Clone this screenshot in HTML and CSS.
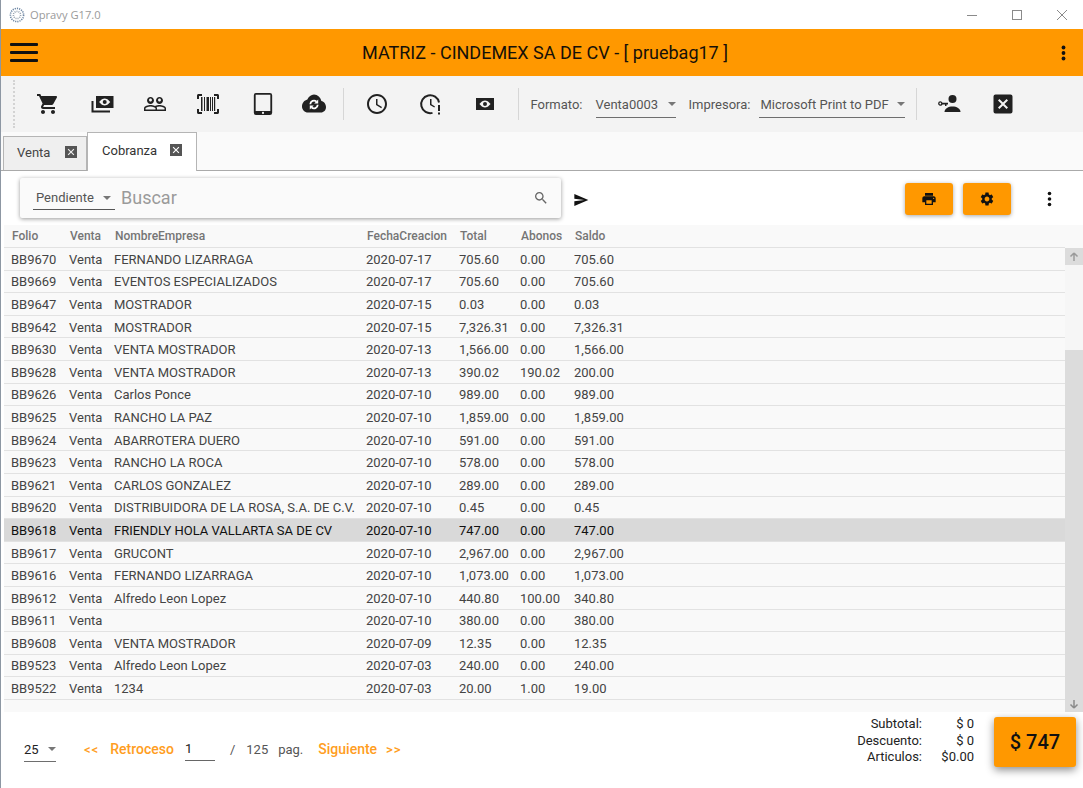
FILE: index.html
```html
<!DOCTYPE html>
<html lang="es">
<head>
<meta charset="utf-8">
<title>Opravy G17.0</title>
<link rel="stylesheet" href="styles.css">
</head>
<body>
<div class="window">
  <header class="titlebar">
    <svg class="applogo" viewBox="0 0 16 16"><circle cx="8" cy="8" r="6.6" fill="none" stroke="#6d86a3" stroke-width="1.6" stroke-dasharray="1.2 1"/><circle cx="8" cy="8" r="3.6" fill="none" stroke="#9aa5b1" stroke-width="1.6" stroke-dasharray="1 1"/></svg>
    <span class="apptitle">Opravy G17.0</span>
    <div class="winbtns">
      <svg viewBox="0 0 12 12" class="winicon"><path d="M1 6.500h10" stroke="#8a8a8a" fill="none"/></svg>
      <svg viewBox="0 0 12 12" class="winicon"><rect x="1.500" y="1.500" width="9" height="9" stroke="#8a8a8a" fill="none"/></svg>
      <svg viewBox="0 0 12 12" class="winicon"><path d="M1 1l10 10M11 1L1 11" stroke="#8a8a8a" fill="none"/></svg>
    </div>
  </header>

  <div class="appbar">
    <div class="hamburger"><span></span><span></span><span></span></div>
    <h1 class="apphead">MATRIZ - CINDEMEX SA DE CV - [ pruebag17 ]</h1>
    <svg class="kebab" viewBox="0 0 4 16"><circle cx="2" cy="2.500" r="1.900"/><circle cx="2" cy="8" r="1.900"/><circle cx="2" cy="13.500" r="1.900"/></svg>
  </div>

  <div class="toolbar">
    <div class="grip"></div>
    <div class="toolgroup first">
      <svg class="ti" viewBox="0 0 24 24"><path d="M7 18c-1.100 0-1.990.9-1.990 2S5.900 22 7 22s2-.9 2-2-.9-2-2-2zM1 2v2h2l3.600 7.590-1.350 2.450c-.16.28-.25.61-.25.96 0 1.100.9 2 2 2h12v-2H7.420c-.14 0-.25-.11-.25-.25l.03-.12.9-1.630h7.450c.75 0 1.410-.41 1.750-1.030l3.580-6.490c.08-.14.12-.31.12-.48 0-.55-.45-1-1-1H5.210l-.94-2H1zm16 16c-1.100 0-1.990.9-1.990 2s.89 2 1.990 2 2-.9 2-2-.9-2-2-2z"/></svg>
      <svg class="ti money" viewBox="0 0 24 24"><path fill-rule="evenodd" d="M6 4h17.500v12H6zM14.700 6.500c-3 0-5.500 3.500-5.500 3.500s2.500 3.500 5.500 3.500 5.500-3.500 5.500-3.500-2.500-3.500-5.500-3.500zM14.700 8a2 2 0 1 1 0 4 2 2 0 0 1 0-4zM1.500 9h2v9.500H20v2H1.500z"/></svg>
      <svg class="ti" viewBox="0 0 24 24"><path d="M16.500 13c-1.200 0-3.070.34-4.500 1-1.430-.67-3.300-1-4.500-1C5.330 13 1 14.080 1 16.250V19h22v-2.750c0-2.170-4.330-3.250-6.500-3.250zm-4 4.500h-10v-1.250c0-.54 2.560-1.750 5-1.750s5 1.210 5 1.750v1.250zm9 0H14v-1.250c0-.46-.2-.86-.52-1.220.88-.3 1.960-.53 3.020-.53 2.440 0 5 1.210 5 1.750v1.250zM7.500 12c1.930 0 3.500-1.570 3.500-3.500S9.430 5 7.500 5 4 6.570 4 8.500 5.570 12 7.500 12zm0-5.500c.83 0 1.500.67 1.500 1.500s-.67 1.500-1.500 1.500S6 8.830 6 8s.67-1.500 1.500-1.500zm9 5.500c1.930 0 3.500-1.570 3.500-3.500S18.430 5 16.500 5 13 6.570 13 8.500s1.570 3.500 3.500 3.500zm0-5.500c.83 0 1.500.67 1.500 1.500s-.67 1.500-1.500 1.500S15 8.830 15 8s.67-1.500 1.500-1.500z"/></svg>
      <svg class="ti" viewBox="0 0 24 24"><path d="M1 7V3.500C1 2.700 1.700 2 2.500 2H6v2H3v3zM23 7V3.500c0-.8-.7-1.500-1.500-1.500H18v2h3v3zM1 17v3.500c0 .8.7 1.500 1.500 1.500H6v-2H3v-3zM23 17v3.500c0 .8-.7 1.500-1.500 1.500H18v-2h3v-3zM5 5h1.500v14H5zM8 5h1v14H8zM10.500 5H13v14h-2.500zM14 5h1v14h-1zM16 5h1v14h-1zM18 5h1.200v14H18z"/></svg>
      <svg class="ti tablet" viewBox="0 0 24 24"><path fill-rule="evenodd" d="M4.500 0h15A2.500 2.500 0 0 1 22 2.500v19a2.500 2.500 0 0 1-2.500 2.500h-15A2.500 2.500 0 0 1 2 21.500v-19A2.500 2.500 0 0 1 4.500 0zM4 2v17.500h16V2zM12 20.500a1.200 1.200 0 1 0 0 2.400 1.200 1.200 0 0 0 0-2.400z"/></svg>
      <svg class="ti" viewBox="0 0 24 24"><path d="M19.350 9.040C18.670 5.590 15.640 2.500 12 2.500 9.110 2.500 6.600 4.640 5.350 7.540 2.340 8.360 0 10.910 0 14.500c0 3.310 2.690 6 6 6h13c2.760 0 5-2.240 5-5.500 0-2.640-2.050-5.780-4.650-5.960z"/><path d="M8.300 12.300a3.700 3.700 0 0 1 6.200-2.700M15.700 12.700a3.700 3.700 0 0 1-6.200 2.700" fill="none" stroke="#fff" stroke-width="1.800"/><path d="M16.200 7.400v4h-4zM7.800 17.600v-4h4z" fill="#fff"/></svg>
    </div>
    <div class="vsep sep1"></div>
    <div class="toolgroup second">
      <svg class="ti" viewBox="0 0 24 24"><path d="M11.990 2C6.470 2 2 6.480 2 12s4.470 10 9.990 10C17.520 22 22 17.520 22 12S17.520 2 11.990 2zM12 20c-4.420 0-8-3.580-8-8s3.580-8 8-8 8 3.580 8 8-3.580 8-8 8zm.5-13H11v6l5.250 3.150.75-1.230-4.500-2.670z"/></svg>
      <svg class="ti" viewBox="0 0 24 24"><path d="M20 10.500A9 9 0 1 0 13.500 20.900" fill="none" stroke="#212121" stroke-width="2"/><path d="M12.500 7H11v6l4.300 2.600.7-1.200-3.500-2.100zM19 13h2v6h-2zM19 20.500h2v2h-2z"/></svg>
      <svg class="ti" viewBox="0 0 24 24"><path fill-rule="evenodd" d="M3 6h18v12H3zM12 8.500c-3 0-5.500 3.500-5.500 3.500s2.500 3.500 5.500 3.500 5.500-3.500 5.500-3.500-2.500-3.500-5.500-3.500zM12 10a2 2 0 1 1 0 4 2 2 0 0 1 0-4z"/></svg>
    </div>
    <div class="vsep sep2"></div>
    <label class="fieldlabel lblfmt">Formato:</label>
    <div class="select sel1"><span>Venta0003</span><i class="caret"></i></div>
    <label class="fieldlabel lblimp">Impresora:</label>
    <div class="select sel2"><span>Microsoft Print to PDF</span><i class="caret"></i></div>
    <div class="vsep sep3"></div>
    <svg class="ti keyuser" viewBox="0 0 24 24"><circle cx="15.500" cy="7" r="4"/><path d="M7.500 20c0-3.500 4-5.500 8-5.500s8 2 8 5.500z"/><path fill-rule="evenodd" d="M3.300 9.200a2.300 2.300 0 0 1 2.200 1.600H11v1.600h-1.500V14H8v-1.600H5.500a2.300 2.300 0 1 1-2.200-3.200zM3.300 10.600a.9.9 0 1 0 0 1.800.9.9 0 0 0 0-1.800z"/></svg>
    <svg class="ti closebox" viewBox="0 0 24 24"><path fill-rule="evenodd" d="M4.500 2.500h15a2 2 0 0 1 2 2v15a2 2 0 0 1-2 2h-15a2 2 0 0 1-2-2v-15a2 2 0 0 1 2-2zM17 15.590L15.590 17 12 13.410 8.410 17 7 15.590 10.590 12 7 8.410 8.410 7 12 10.590 15.590 7 17 8.410 13.410 12z"/></svg>
  </div>

  <nav class="tabs">
    <div class="tab idle"><span>Venta</span><svg class="tabx" viewBox="0 0 12 12"><path d="M0 0h12v12H0zM3.500 2.700L2.700 3.500 5.200 6 2.700 8.500l.8.8L6 6.800l2.500 2.500.8-.8L6.800 6l2.500-2.500-.8-.8L6 5.200z" fill-rule="evenodd"/></svg></div>
    <div class="tab active"><span>Cobranza</span><svg class="tabx" viewBox="0 0 12 12"><path d="M0 0h12v12H0zM3.500 2.700L2.700 3.500 5.200 6 2.700 8.500l.8.8L6 6.800l2.500 2.500.8-.8L6.800 6l2.500-2.500-.8-.8L6 5.200z" fill-rule="evenodd"/></svg></div>
  </nav>

  <section class="searchrow">
    <div class="searchcard">
      <div class="select sel3"><span>Pendiente</span><i class="caret"></i></div>
      <span class="placeholder">Buscar</span>
      <svg class="searchicon" viewBox="0 0 24 24"><path d="M15.500 14h-.79l-.28-.27C15.410 12.590 16 11.110 16 9.500 16 5.910 13.090 3 9.500 3S3 5.910 3 9.500 5.910 16 9.500 16c1.610 0 3.090-.59 4.230-1.570l.27.28v.79l5 4.990L20.490 19l-4.990-5zm-6 0C7.010 14 5 11.990 5 9.500S7.010 5 9.500 5 14 7.010 14 9.500 11.990 14 9.500 14z"/></svg>
    </div>
    <svg class="sendicon" viewBox="0 0 24 24"><path d="M2.010 21L23 12 2.010 3 2 10l15 2-15 2z"/></svg>
    <div class="actions">
      <button class="orangebtn"><svg viewBox="0 0 24 24"><path d="M19 8H5c-1.660 0-3 1.340-3 3v6h4v4h12v-4h4v-6c0-1.660-1.340-3-3-3zm-3 11H8v-5h8v5zm3-7c-.55 0-1-.45-1-1s.45-1 1-1 1 .45 1 1-.45 1-1 1zm-1-9H6v4h12V3z"/></svg></button>
      <button class="orangebtn"><svg viewBox="0 0 24 24"><path d="M19.140 12.940c.04-.3.06-.61.06-.94 0-.32-.02-.64-.07-.94l2.030-1.580c.18-.14.23-.41.12-.61l-1.920-3.320c-.12-.22-.37-.29-.59-.22l-2.390.96c-.5-.38-1.030-.7-1.620-.94L14.400 2.810c-.04-.24-.24-.41-.48-.41h-3.840c-.24 0-.43.17-.47.41L9.250 5.350c-.59.24-1.130.57-1.620.94l-2.390-.96c-.22-.08-.47 0-.59.22L2.740 8.870c-.12.21-.08.47.12.61l2.030 1.580c-.05.3-.09.63-.09.94s.02.64.07.94l-2.030 1.580c-.18.14-.23.41-.12.61l1.920 3.320c.12.22.37.29.59.22l2.390-.96c.5.38 1.030.7 1.620.94l.36 2.540c.05.24.24.41.48.41h3.840c.24 0 .44-.17.47-.41l.36-2.540c.59-.24 1.130-.56 1.620-.94l2.390.96c.22.08.47 0 .59-.22l1.920-3.320c.12-.22.07-.47-.12-.61l-2.010-1.580zM12 15.600c-1.980 0-3.600-1.620-3.600-3.600s1.620-3.600 3.600-3.600 3.600 1.620 3.600 3.600-1.620 3.600-3.600 3.600z"/></svg></button>
      <svg class="kebab kebab2" viewBox="0 0 4 16"><circle cx="2" cy="2.500" r="1.800"/><circle cx="2" cy="8" r="1.800"/><circle cx="2" cy="13.500" r="1.800"/></svg>
    </div>
  </section>

  <section class="grid">
    <div class="row head"><span>Folio</span><span>Venta</span><span>NombreEmpresa</span><span>FechaCreacion</span><span>Total</span><span>Abonos</span><span>Saldo</span></div>
    <div class="body">
      <div class="rows">
        <div class="row"><span>BB9670</span><span>Venta</span><span>FERNANDO LIZARRAGA</span><span>2020-07-17</span><span>705.60</span><span>0.00</span><span>705.60</span></div>
        <div class="row"><span>BB9669</span><span>Venta</span><span>EVENTOS ESPECIALIZADOS</span><span>2020-07-17</span><span>705.60</span><span>0.00</span><span>705.60</span></div>
        <div class="row"><span>BB9647</span><span>Venta</span><span>MOSTRADOR</span><span>2020-07-15</span><span>0.03</span><span>0.00</span><span>0.03</span></div>
        <div class="row"><span>BB9642</span><span>Venta</span><span>MOSTRADOR</span><span>2020-07-15</span><span>7,326.31</span><span>0.00</span><span>7,326.31</span></div>
        <div class="row"><span>BB9630</span><span>Venta</span><span>VENTA MOSTRADOR</span><span>2020-07-13</span><span>1,566.00</span><span>0.00</span><span>1,566.00</span></div>
        <div class="row"><span>BB9628</span><span>Venta</span><span>VENTA MOSTRADOR</span><span>2020-07-13</span><span>390.02</span><span>190.02</span><span>200.00</span></div>
        <div class="row"><span>BB9626</span><span>Venta</span><span>Carlos Ponce</span><span>2020-07-10</span><span>989.00</span><span>0.00</span><span>989.00</span></div>
        <div class="row"><span>BB9625</span><span>Venta</span><span>RANCHO LA PAZ</span><span>2020-07-10</span><span>1,859.00</span><span>0.00</span><span>1,859.00</span></div>
        <div class="row"><span>BB9624</span><span>Venta</span><span>ABARROTERA DUERO</span><span>2020-07-10</span><span>591.00</span><span>0.00</span><span>591.00</span></div>
        <div class="row"><span>BB9623</span><span>Venta</span><span>RANCHO LA ROCA</span><span>2020-07-10</span><span>578.00</span><span>0.00</span><span>578.00</span></div>
        <div class="row"><span>BB9621</span><span>Venta</span><span>CARLOS GONZALEZ</span><span>2020-07-10</span><span>289.00</span><span>0.00</span><span>289.00</span></div>
        <div class="row"><span>BB9620</span><span>Venta</span><span>DISTRIBUIDORA DE LA ROSA, S.A. DE C.V.</span><span>2020-07-10</span><span>0.45</span><span>0.00</span><span>0.45</span></div>
        <div class="row selected"><span>BB9618</span><span>Venta</span><span>FRIENDLY HOLA VALLARTA SA DE CV</span><span>2020-07-10</span><span>747.00</span><span>0.00</span><span>747.00</span></div>
        <div class="row"><span>BB9617</span><span>Venta</span><span>GRUCONT</span><span>2020-07-10</span><span>2,967.00</span><span>0.00</span><span>2,967.00</span></div>
        <div class="row"><span>BB9616</span><span>Venta</span><span>FERNANDO LIZARRAGA</span><span>2020-07-10</span><span>1,073.00</span><span>0.00</span><span>1,073.00</span></div>
        <div class="row"><span>BB9612</span><span>Venta</span><span>Alfredo Leon Lopez</span><span>2020-07-10</span><span>440.80</span><span>100.00</span><span>340.80</span></div>
        <div class="row"><span>BB9611</span><span>Venta</span><span></span><span>2020-07-10</span><span>380.00</span><span>0.00</span><span>380.00</span></div>
        <div class="row"><span>BB9608</span><span>Venta</span><span>VENTA MOSTRADOR</span><span>2020-07-09</span><span>12.35</span><span>0.00</span><span>12.35</span></div>
        <div class="row"><span>BB9523</span><span>Venta</span><span>Alfredo Leon Lopez</span><span>2020-07-03</span><span>240.00</span><span>0.00</span><span>240.00</span></div>
        <div class="row"><span>BB9522</span><span>Venta</span><span>1234</span><span>2020-07-03</span><span>20.00</span><span>1.00</span><span>19.00</span></div>
      </div>
      <div class="scrollbar">
        <div class="sbtn"><svg viewBox="0 0 10 10"><path d="M5 1L1.500 4.500M5 1l3.500 3.500M5 1v8" fill="none" stroke="#9a9a9a" stroke-width="1.500"/></svg></div>
        <div class="strack"></div>
        <div class="sthumb"></div>
        <div class="sbtn"><svg viewBox="0 0 10 10"><path d="M5 9L1.500 5.500M5 9l3.500-3.500M5 9V1" fill="none" stroke="#8a8a8a" stroke-width="1.500"/></svg></div>
      </div>
    </div>
  </section>

  <footer class="footer">
    <div class="select sel4"><span>25</span><i class="caret"></i></div>
    <a class="pglink arrows first-arrows">&lt;&lt;</a>
    <a class="pglink">Retroceso</a>
    <div class="pageinput">1</div>
    <span class="pgtext slash">/</span>
    <span class="pgtext">125</span>
    <span class="pgtext pag">pag.</span>
    <a class="pglink sig">Siguiente</a>
    <a class="pglink arrows">&gt;&gt;</a>
    <div class="totals">
      <span>Subtotal:</span><span>$ 0</span>
      <span>Descuento:</span><span>$ 0</span>
      <span>Articulos:</span><span>$0.00</span>
    </div>
    <button class="totalbtn">$ 747</button>
  </footer>
</div>
</body>
</html>
```

FILE: styles.css
```css
* { box-sizing: border-box; }
html, body { margin: 0; padding: 0; height: 100%; overflow: hidden; background: #fff; }
body { font-family: Roboto, "Liberation Sans", sans-serif; color: #444; }
.window { width: 1083px; height: 788px; display: flex; flex-direction: column; border-left: 1px solid #8d97a3; }

.titlebar { height: 29px; flex: none; display: flex; align-items: center; padding-left: 8px; background: #fff; }
.applogo { width: 16px; height: 16px; }
.apptitle { margin-left: 5px; font: 11.2px "Open Sans", sans-serif; color: #9a9a9a; }
.winbtns { margin-left: auto; display: flex; gap: 33px; padding-right: 15px; }
.winicon { width: 12px; height: 12px; display: block; }

.appbar { height: 47px; flex: none; display: flex; align-items: center; background: #ff9800; padding: 0 17px 0 9px; }
.hamburger { width: 28px; display: flex; flex-direction: column; gap: 5px; }
.hamburger span { display: block; height: 3px; background: #111; border-radius: 1px; }
.apphead { flex: 1; margin: 0; text-align: center; font-size: 18px; font-weight: 400; color: #151008; padding-right: 9px; }
.kebab { width: 5px; height: 16px; fill: #111; display: block; }

.toolbar { height: 56px; flex: none; display: flex; align-items: center; background: #f3f3f3; padding-left: 12px; color: #444; }
.grip { width: 2px; height: 48px; border-left: 2px dotted #d3d3d3; }
.toolgroup { display: flex; align-items: center; }
.toolgroup.first { gap: 29.3px; margin-left: 21px; }
.toolgroup.second { gap: 30px; margin-left: 21px; }
.ti { width: 24px; height: 24px; flex: none; fill: #212121; display: block; }
.money { margin: 0 -1px 0 1px; }
.tablet { height: 22px; margin: 0 -2px 0 2px; }
.vsep { width: 1px; height: 32px; background: #d6d6d6; margin-left: 16px; flex: none; }
.sep1 { margin-left: 17px; }
.sep2 { margin-left: 21px; }
.fieldlabel { font-size: 13px; color: #555; }
.lblfmt { margin-left: 11px; }
.lblimp { margin-left: 13px; }
.select { display: flex; align-items: center; justify-content: space-between; border-bottom: 1px solid #6e6e6e; font-size: 13px; color: #555; height: 28px; padding-top: 1px; }
.caret { width: 0; height: 0; border-left: 4px solid transparent; border-right: 4px solid transparent; border-top: 4px solid #777; }
.sel1 { width: 80px; margin-left: 13px; }
.sel2 { width: 146px; margin-left: 9px; padding-left: 1px; }
.sep3 { margin-left: 11px; }
.keyuser { margin-left: 20px; }
.closebox { margin-left: 30px; }

.tabs { height: 39px; flex: none; display: flex; align-items: flex-end; padding-left: 2px; background: #fafafa; border-bottom: 1px solid #aaa; }
.tab { display: flex; align-items: center; font-size: 13px; color: #444; border: 1px solid #b5b5b5; border-bottom: none; }
.tab.idle { width: 84px; height: 34px; background: #efefef; padding: 0 0 3px 13px; gap: 15px; }
.tab.active { width: 110px; height: 39px; background: #fff; padding: 0 0 4px 14px; gap: 13px; margin-bottom: -1px; color: #333; }
.tabx { width: 12px; height: 12px; fill: #555; flex: none; }

.searchrow { height: 54px; flex: none; display: flex; align-items: flex-start; padding: 7px 18px 0 19px; background: #fff; }
.searchcard { width: 541px; height: 40px; display: flex; align-items: center; background: #fafafa; box-shadow: 0 1px 4px rgba(0,0,0,.4); border-radius: 2px; padding: 0 13px; }
.sel3 { width: 82px; height: 24px; flex: none; font-size: 13px; padding: 0 4px 0 3px; border-bottom-color: #555; }
.placeholder { margin-left: 6px; font-size: 18px; line-height: 22px; padding-top: 1px; padding-bottom: 1px; color: #9a9a9a; flex: 1; }
.searchicon { width: 16px; height: 16px; fill: #666; flex: none; margin-right: -1px; }
.sendicon { width: 16px; height: 16px; margin: 14px 0 0 12px; fill: #111; flex: none; }
.actions { margin-left: auto; display: flex; align-items: center; gap: 10px; padding-top: 5px; }
.orangebtn { width: 48px; height: 32px; background: #ff9800; border: none; border-radius: 3px; box-shadow: 0 1px 4px rgba(0,0,0,.35); display: flex; align-items: center; justify-content: center; padding: 0; }
.orangebtn svg { width: 16px; height: 16px; fill: #111; }
.kebab2 { margin: 0 13px 0 26px; }

.grid { height: 487px; flex: none; margin-left: 3px; background: #f9f9f9; display: flex; flex-direction: column; }
.row { display: grid; grid-template-columns: 58px 45px 252px 93px 61px 54px 1fr; padding: 1px 0 0 7px; height: 22.6px; align-items: center; font-size: 13px; color: #444; border-bottom: 1px solid #e2e2e2; white-space: nowrap; }
.row.head { height: 23px; flex: none; font-size: 12px; font-weight: 500; color: #757575; margin-right: 18px; padding: 0 0 0 8px; }
.row.selected { background: #d9d9d9; color: #111; }
.body { flex: 1; display: flex; min-height: 0; }
.rows { flex: 1; min-width: 0; }
.scrollbar { width: 18px; flex: none; display: flex; flex-direction: column; background: #f1f1f1; }
.sbtn { height: 17px; flex: none; background: #dcdcdc; display: flex; align-items: center; justify-content: center; }
.sbtn svg { width: 10px; height: 10px; }
.strack { height: 85px; flex: none; background: #f6f6f6; }
.sthumb { flex: 1; background: #dcdcdc; }

.footer { flex: 1; min-height: 0; display: flex; align-items: center; padding: 0 7px 2px 23px; font-size: 13px; color: #444; background: #fff; }
.sel4 { width: 32px; height: 26px; color: #222; flex: none; }
.pglink { font-size: 14px; font-weight: 500; color: #ff9d21; }
.arrows { font-size: 13px; letter-spacing: 1px; }
.first-arrows { margin-left: 28px; margin-right: 11px; }
.pageinput { width: 30px; margin-left: 11px; height: 24px; display: flex; align-items: center; border-bottom: 1px solid #666; color: #222; }
.pgtext { color: #555; }
.slash { margin-left: 15px; margin-right: 11px; }
.pag { margin-left: 10px; }
.sig { margin-left: 15px; margin-right: 9px; }
.totals { margin-left: auto; display: grid; grid-template-columns: auto 52px; justify-items: end; font-size: 13px; line-height: 16.500px; color: #222; margin-right: 20px; margin-top: -16px; }
.totalbtn { width: 82px; height: 50px; background: #ff9800; border: none; border-radius: 3px; box-shadow: 0 3px 8px rgba(0,0,0,.45); font: 500 20px Roboto, sans-serif; color: #111; padding: 0; margin-top: -14px; }
```
